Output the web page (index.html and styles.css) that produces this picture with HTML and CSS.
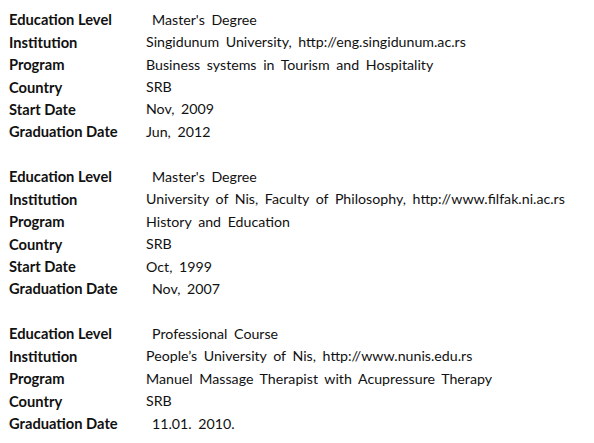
FILE: index.html
```html
<!DOCTYPE html>
<html>
<head>
<meta charset="utf-8">
<link rel="stylesheet" href="styles.css">
</head>
<body>
<div class="edu">
  <dl class="entry">
    <dt>Education Level</dt><dd class="ind">Master's Degree</dd>
    <dt>Institution</dt><dd>Singidunum University, http://eng.singidunum.ac.rs</dd>
    <dt>Program</dt><dd>Business systems in Tourism and Hospitality</dd>
    <dt>Country</dt><dd>SRB</dd>
    <dt>Start Date</dt><dd>Nov, 2009</dd>
    <dt>Graduation Date</dt><dd>Jun, 2012</dd>
  </dl>
  <dl class="entry">
    <dt>Education Level</dt><dd class="ind">Master's Degree</dd>
    <dt>Institution</dt><dd>University of Nis, Faculty of Philosophy, http://www.filfak.ni.ac.rs</dd>
    <dt>Program</dt><dd>History and Education</dd>
    <dt>Country</dt><dd>SRB</dd>
    <dt>Start Date</dt><dd>Oct, 1999</dd>
    <dt>Graduation Date</dt><dd class="ind">Nov, 2007</dd>
  </dl>
  <dl class="entry">
    <dt>Education Level</dt><dd class="ind">Professional Course</dd>
    <dt>Institution</dt><dd>People’s University of Nis, http://www.nunis.edu.rs</dd>
    <dt>Program</dt><dd>Manuel Massage Therapist with Acupressure Therapy</dd>
    <dt>Country</dt><dd>SRB</dd>
    <dt>Graduation Date</dt><dd class="ind">11.01. 2010.</dd>
  </dl>
</div>
</body>
</html>
```
FILE: styles.css
```css
html, body {
  background: #fff;
}
body {
  margin: 8px 0 0 9px;
  font-family: Lato, "Open Sans", sans-serif;
  font-size: 14.2px;
  color: #111;
}
.edu {
  display: flex;
  flex-direction: column;
  gap: 22.45px;
}
.entry {
  display: grid;
  grid-template-columns: 137px auto;
  grid-auto-rows: 22.45px;
  align-items: center;
  margin: 0;
}
.entry dt {
  font-weight: bold;
  font-size: 14.7px;
  margin: 0;
}
.entry dd {
  margin: 0;
  white-space: nowrap;
  word-spacing: 3px;
}
.entry dd.ind {
  padding-left: 6px;
}
```
